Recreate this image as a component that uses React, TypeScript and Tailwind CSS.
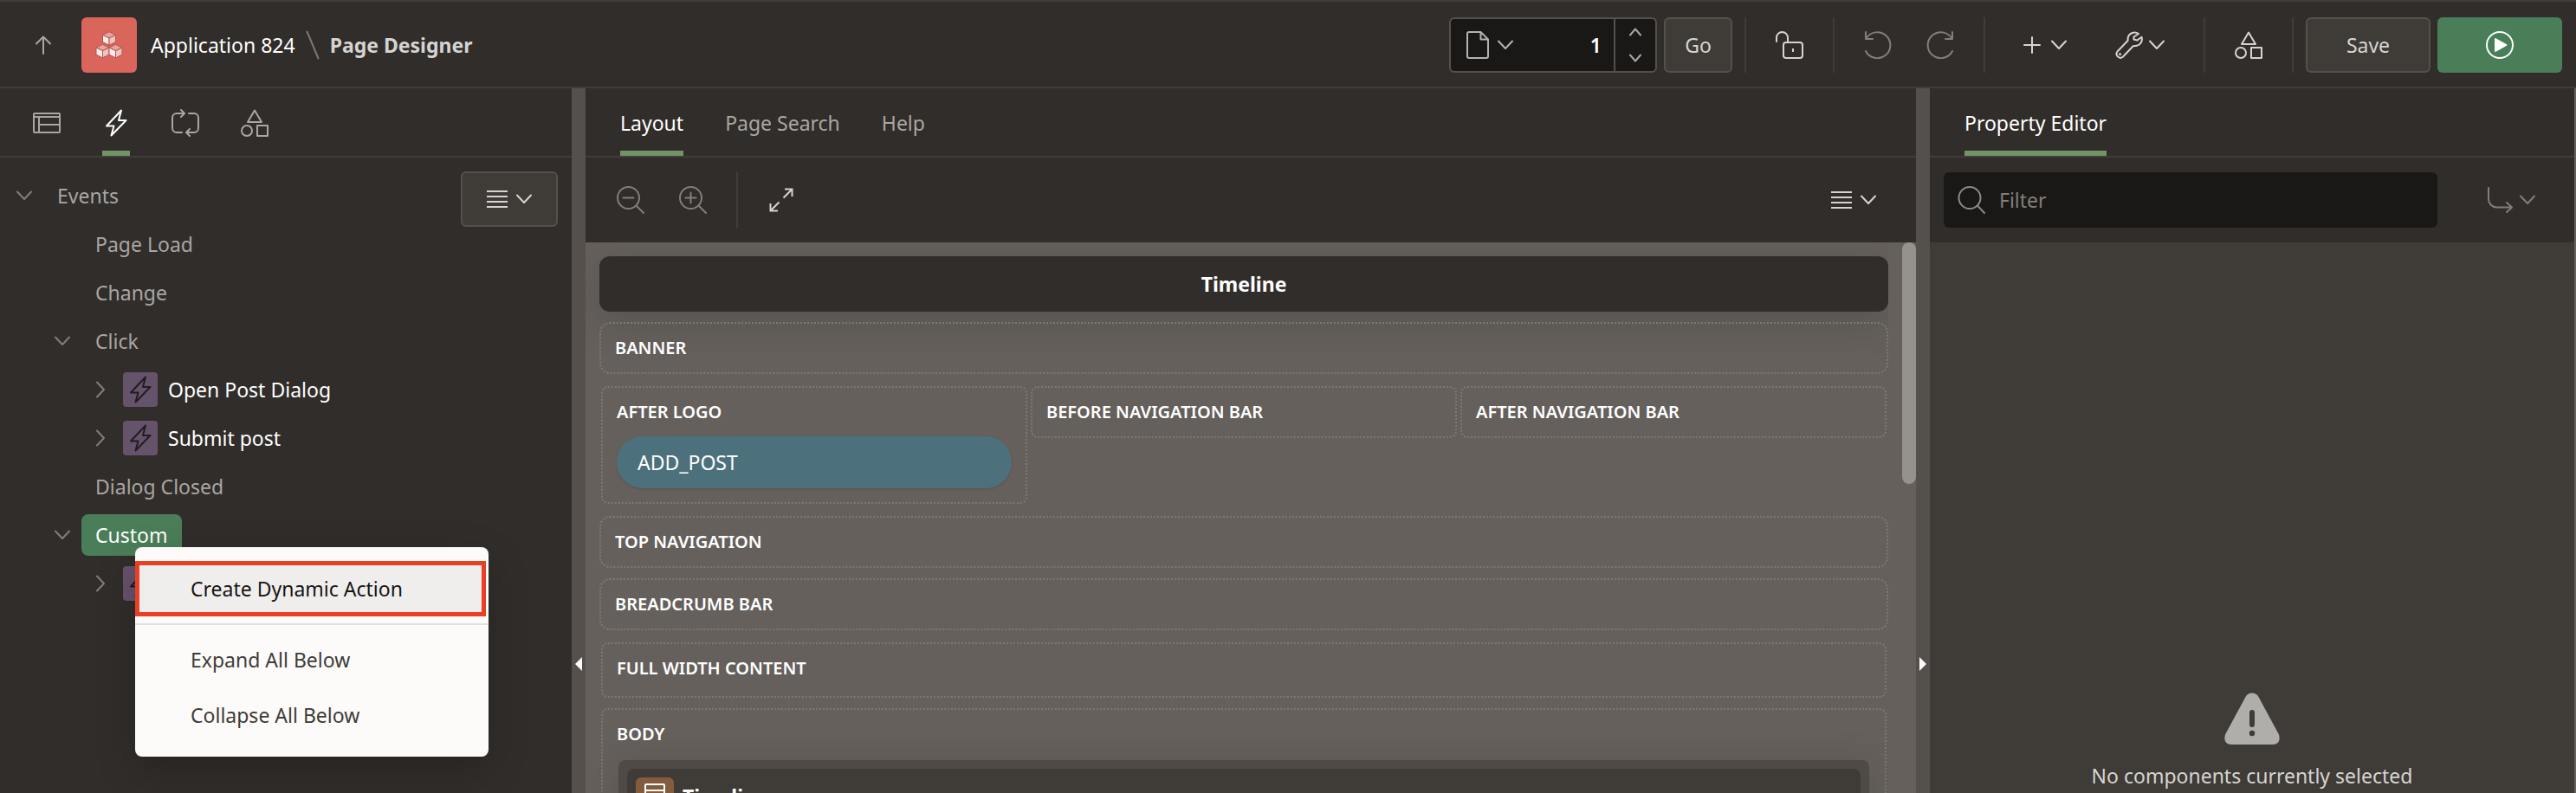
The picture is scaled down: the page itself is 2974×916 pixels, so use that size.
import React from "react";

type IconProps = { className?: string };

function Svg({
  w = 32,
  h = 32,
  className = "",
  children,
}: {
  w?: number;
  h?: number;
  className?: string;
  children: React.ReactNode;
}) {
  return (
    <svg
      width={w}
      height={h}
      viewBox={`0 0 ${w} ${h}`}
      fill="none"
      stroke="currentColor"
      strokeWidth={2}
      strokeLinecap="round"
      strokeLinejoin="round"
      aria-hidden="true"
      className={`shrink-0 ${className}`}
    >
      {children}
    </svg>
  );
}

const ChevronDown = ({ className }: IconProps) => (
  <Svg w={18} h={12} className={className}>
    <path d="M1 1.5 9 10 17 1.5" />
  </Svg>
);
const ChevronRight = ({ className }: IconProps) => (
  <Svg w={12} h={20} className={className}>
    <path d="M2 1.5 10 10 2 18.5" />
  </Svg>
);
const ListIcon = () => (
  <Svg w={24} h={22}>
    <path strokeLinecap="butt" d="M0 2h24M0 8h24M0 14h24M0 20h24" />
  </Svg>
);
const Bolt = ({ className }: IconProps) => (
  <Svg className={className}>
    <path d="M22 1.5 5 19.5h8.5L10.5 30.5 27.5 13H19Z" />
  </Svg>
);
const Shapes = () => (
  <Svg>
    <path d="M16 1.5 8 15h16Z" />
    <circle cx="7" cy="25" r="6" />
    <rect x="19" y="19" width="12" height="12" />
  </Svg>
);
const PageTree = () => (
  <Svg>
    <rect x="1" y="5" width="30" height="22" rx="1" />
    <path d="M1 9h30M7 9v18M7 18h24" />
  </Svg>
);
const Processing = () => (
  <Svg>
    <path d="M12 27H6a5 5 0 0 1-5-5V10a5 5 0 0 1 5-5h9M11 1l4 4-4 4M20 5h6a5 5 0 0 1 5 5v12a5 5 0 0 1-5 5h-9M21 23l-4 4 4 4" />
  </Svg>
);
const Undo = ({ className }: IconProps) => (
  <Svg className={className}>
    <path d="M2 1v8h8M2.5 8.5A15 15 0 1 1 2 23" />
  </Svg>
);

function Logo() {
  const cube = (x: number, y: number) => (
    <g key={`${x}-${y}`} transform={`translate(${x} ${y})`} stroke="#b8534b" strokeWidth="1" strokeLinejoin="round">
      <path d="M0 0 7.5 3.7 0 7.4-7.5 3.7Z" fill="#e8a59f" />
      <path d="M-7.5 3.7 0 7.4v8.1l-7.5-3.7Z" fill="#f8efee" />
      <path d="M7.5 3.7 0 7.4v8.1l7.5-3.7Z" fill="#efc3bf" />
    </g>
  );
  return (
    <svg width="64" height="64" viewBox="0 0 64 64" className="shrink-0 rounded-md bg-[#d9655b]" aria-hidden="true">
      {cube(32, 16.7)}
      {cube(24.5, 31.3)}
      {cube(39.5, 31.3)}
    </svg>
  );
}

const Divider = () => <span className="h-16 w-0.5 shrink-0 bg-[#403c38]" />;

function Header() {
  return (
    <header className="flex h-[102px] shrink-0 items-center border-y-2 border-[#403c38] pt-0.5 pr-4">
      <a href="#up" aria-label="Up" className="ml-10 text-[#a9a6a3]">
        <Svg w={20} h={22}>
          <path d="M10 21V1.5M2 9.5l8-8 8 8" />
        </Svg>
      </a>
      <a href="#app" className="ml-[34px] flex items-center gap-4 text-white">
        <Logo />
        Application 824
      </a>
      <Svg w={16} h={34} className="ml-3 text-[#7c7873]">
        <path d="M1.5 1.5 14.5 32.5" />
      </Svg>
      <h1 className="ml-3 font-bold text-[#d6d4d2]">Page Designer</h1>

      <div className="ml-auto flex items-center">
        <div className="flex h-16 w-60 rounded-md border-2 border-[#55504b] bg-[#1a1816]">
          <button aria-label="Page finder" className="flex items-center gap-2.5 pl-[18px] text-[#b5b2af]">
            <Svg w={26} h={32}>
              <path d="M16.5 1H3a2 2 0 0 0-2 2v26a2 2 0 0 0 2 2h20a2 2 0 0 0 2-2V9.5ZM16.5 1v8.5H25" />
            </Svg>
            <ChevronDown />
          </button>
          <input
            aria-label="Page number"
            defaultValue="1"
            className="w-0 min-w-0 grow bg-transparent pr-3.5 text-right font-semibold text-white outline-none"
          />
          <div className="flex w-12 flex-col items-center justify-center gap-5 border-l-2 border-[#55504b] text-[#a9a6a3]">
            <button aria-label="Next page">
              <Svg w={14} h={10}>
                <path d="M1 8.5 7 1.5 13 8.5" />
              </Svg>
            </button>
            <button aria-label="Previous page">
              <Svg w={14} h={10}>
                <path d="M1 1.5 7 8.5 13 1.5" />
              </Svg>
            </button>
          </div>
        </div>
        <button className="ml-2 mr-3.5 h-16 w-[79px] rounded-md border-2 border-[#55504b] bg-[#3f3b36] text-[#d6d4d2]">Go</button>
        <Divider />
        <button aria-label="Unlock page" className="flex w-[100px] justify-center text-[#d6d4d2]">
          <Svg>
            <path d="M1 12V7.5a6.5 6.5 0 0 1 13 0V13" />
            <rect x="9" y="13" width="22" height="18" rx="3" />
            <path strokeLinecap="butt" d="M20 20v4" />
          </Svg>
        </button>
        <Divider />
        <div className="flex w-[172px] justify-center gap-10 text-[#827e7a]">
          <button aria-label="Undo">
            <Undo />
          </button>
          <button aria-label="Redo">
            <Undo className="-scale-x-100" />
          </button>
        </div>
        <Divider />
        <div className="flex w-[252px] items-center pl-11 text-[#d6d4d2]">
          <button aria-label="Create" className="flex items-center gap-3">
            <Svg w={20} h={20}>
              <path d="M10 1v18M1 10h18" />
            </Svg>
            <ChevronDown />
          </button>
          <button aria-label="Utilities" className="ml-14 flex items-center gap-[7px]">
            <Svg>
              <path d="M27 3C22.5 0 16.5 2 15 6.5c-.5 1.5-.3 3-.5 4.500L2.500 23.5a4.500 4.500 0 0 0 6.300 6.300L20.500 17.500c1-.6 2.500-.2 4.500-.8 4.500-1.200 7-5.500 5.500-10L25.500 10.500 21.500 9.500 21.500 6.500Z" />
              <circle cx="5.5" cy="26.5" r=".6" />
            </Svg>
            <ChevronDown />
          </button>
        </div>
        <Divider />
        <button aria-label="Shared components" className="flex w-[100px] justify-center text-[#d6d4d2]">
          <Shapes />
        </button>
        <Divider />
        <button className="ml-3.5 h-16 w-36 rounded-md border-2 border-[#55504b] bg-[#3f3b36] text-[#d6d4d2]">Save</button>
        <button aria-label="Run page" className="ml-2 flex h-16 w-36 items-center justify-center rounded-md bg-[#4a7e58] text-white">
          <Svg>
            <circle cx="16" cy="16" r="15" />
            <path d="M11 9v14l12.5-7Z" fill="currentColor" />
          </Svg>
        </button>
      </div>
    </header>
  );
}

const tabBar = "flex h-20 shrink-0 border-b-2 border-[#403c38]";
const tabOn = "border-b-[6px] border-[#729467] pt-2 text-white";
const tabOff = "pt-0.5 text-[#a9a6a3]";

function TreeRow({
  level,
  open,
  leaf,
  icon,
  label,
  selected,
}: {
  level: 0 | 1 | 2;
  open?: boolean;
  leaf?: boolean;
  icon?: boolean;
  label: string;
  selected?: boolean;
}) {
  const indent = ["pl-[18px]", "pl-[62px]", "pl-[106px]"][level];
  return (
    <li className={`flex h-14 items-center ${indent}`}>
      <span className="flex w-5 shrink-0 justify-center text-[#827e7a]">
        {!leaf && (open ? <ChevronDown /> : <ChevronRight />)}
      </span>
      {icon && (
        <span className="ml-4 flex size-10 shrink-0 items-center justify-center rounded-sm bg-[#65536c] text-[#211d20]">
          <Bolt />
        </span>
      )}
      <span
        className={
          selected
            ? "ml-3 flex h-12 items-center rounded-lg bg-[#4a7e58] px-4 text-white"
            : icon
              ? "ml-3 text-white"
              : "ml-7 text-[#a9a6a3]"
        }
      >
        {label}
      </span>
    </li>
  );
}

function ContextMenu() {
  return (
    <div className="absolute left-[156px] top-[530px] w-[408px] rounded-lg bg-[#fcfbfa] py-4 text-[#403c38] shadow-[0_16px_48px_rgba(0,0,0,0.2)]">
      <button className="flex h-16 w-[405px] items-center border-[5px] border-[#e93f24] bg-[#f0eeed] pl-[59px] text-[#161513]">
        Create Dynamic Action
      </button>
      <hr className="my-2 border-t-2 border-[#e3e1df]" />
      <button className="flex h-16 w-full items-center pl-16">Expand All Below</button>
      <button className="flex h-16 w-full items-center pl-16">Collapse All Below</button>
    </div>
  );
}

function EventsPanel() {
  return (
    <aside className="relative w-[660px] shrink-0">
      <nav className={`${tabBar} gap-12 pl-[38px]`}>
        <button aria-label="Rendering" className={tabOff}>
          <PageTree />
        </button>
        <button aria-label="Dynamic actions" className={tabOn}>
          <Bolt />
        </button>
        <button aria-label="Processing" className={tabOff}>
          <Processing />
        </button>
        <button aria-label="Page shared components" className={tabOff}>
          <Shapes />
        </button>
      </nav>
      <div className="flex items-start justify-between pr-4">
        <ul className="pt-4">
          <TreeRow level={0} open label="Events" />
          <TreeRow level={1} leaf label="Page Load" />
          <TreeRow level={1} leaf label="Change" />
          <TreeRow level={1} open label="Click" />
          <TreeRow level={2} icon label="Open Post Dialog" />
          <TreeRow level={2} icon label="Submit post" />
          <TreeRow level={1} leaf label="Dialog Closed" />
          <TreeRow level={1} open selected label="Custom" />
          <TreeRow level={2} icon label="" />
        </ul>
        <button
          aria-label="Tree options"
          className="mt-4 flex h-16 w-28 items-center justify-center gap-2.5 rounded-md border-2 border-[#55504b] bg-[#3f3b36] text-[#d6d4d2]"
        >
          <ListIcon />
          <ChevronDown />
        </button>
      </div>
      <ContextMenu />
    </aside>
  );
}

function Splitter({ side }: { side: "left" | "right" }) {
  return (
    <div className="flex w-4 shrink-0 flex-col items-center bg-[#55504b] pt-[657px]">
      <svg width="8" height="16" viewBox="0 0 8 16" fill="#fcfbfa" aria-hidden="true">
        <path d={side === "left" ? "M8 0v16L0 8Z" : "M0 0v16l8-8Z"} />
      </svg>
    </div>
  );
}

function Region({
  title,
  rounded = "rounded-lg",
  children,
  className = "",
}: {
  title: string;
  rounded?: string;
  children?: React.ReactNode;
  className?: string;
}) {
  return (
    <section className={`border-2 border-dotted border-[#7d7873] px-4 ${rounded} ${className}`}>
      <h3 className="text-xl leading-[56px] font-semibold text-white uppercase">{title}</h3>
      {children}
    </section>
  );
}

function LayoutPanel() {
  return (
    <main className="flex min-w-0 grow flex-col">
      <nav className={`${tabBar} gap-12 pl-10`}>
        <button className={tabOn}>Layout</button>
        <button className={tabOff}>Page Search</button>
        <button className={tabOff}>Help</button>
      </nav>
      <div className="flex h-[98px] shrink-0 items-center pr-[46px] pl-9">
        <button aria-label="Zoom out" className="text-[#827e7a]">
          <Svg>
            <circle cx="13.5" cy="13.5" r="12.5" />
            <path d="M22.5 22.5 31 31M7.5 13.5h12" />
          </Svg>
        </button>
        <button aria-label="Zoom in" className="ml-10 text-[#827e7a]">
          <Svg>
            <circle cx="13.5" cy="13.5" r="12.5" />
            <path d="M22.5 22.5 31 31M7.5 13.5h12M13.5 7.5v12" />
          </Svg>
        </button>
        <span className="ml-[34px] h-16 w-0.5 bg-[#403c38]" />
        <button aria-label="Expand" className="ml-9 text-[#d6d4d2]">
          <Svg w={28} h={30}>
            <path
              strokeLinecap="butt"
              strokeLinejoin="miter"
              d="M16.5 12.5 26 3M18 2.5h8.5V11M11.5 17.5 2 27M1.5 19v8.5H10"
            />
          </Svg>
        </button>
        <button aria-label="Layout options" className="ml-auto flex items-center gap-2.5 text-[#d6d4d2]">
          <ListIcon />
          <ChevronDown />
        </button>
      </div>
      <div className="flex min-h-0 grow bg-[#65605c]">
        <div className="flex h-full grow flex-col gap-3 overflow-hidden pt-4 pl-4">
          <h2 className="h-16 shrink-0 rounded-xl bg-[#312d2a] text-center leading-[64px] font-bold text-white shadow-[0_12px_48px_rgba(0,0,0,0.14)]">
            Timeline
          </h2>
          <Region title="Banner" rounded="rounded-xl" />
          <div className="grid grid-cols-3 items-start gap-1 p-0.5">
            <Region title="After Logo" className="pb-4">
              <div className="rounded-full bg-[#4d717c] px-6 leading-[60px] text-white shadow-sm">ADD_POST</div>
            </Region>
            <Region title="Before Navigation Bar" />
            <Region title="After Navigation Bar" />
          </div>
          <Region title="Top Navigation" rounded="rounded-xl" />
          <Region title="Breadcrumb Bar" rounded="rounded-xl" />
          <div className="flex flex-col gap-3 p-0.5">
            <Region title="Full Width Content" className="pb-1" />
            <Region title="Body">
              <div className="mx-0.5 mt-0.5 rounded-lg bg-[#4f4a46] p-2.5 shadow-[0_8px_48px_rgba(0,0,0,0.14)]">
                <div className="flex h-64 items-start gap-2.5 rounded-lg bg-[#3f3b36] p-2.5">
                  <span className="flex size-11 items-center justify-center rounded-md bg-[#835c3e] text-white">
                    <Svg w={24} h={32}>
                      <rect x="1" y="2" width="22" height="28" rx="1" />
                      <path d="M1 9h22M1 17h22M1 24h22" />
                    </Svg>
                  </span>
                  <h4 className="leading-[44px] font-bold text-white">Timeline</h4>
                </div>
              </div>
            </Region>
          </div>
        </div>
        <div className="w-8 shrink-0 pl-4">
          <div className="h-[279px] rounded-full bg-[#95918c]" />
        </div>
      </div>
    </main>
  );
}

function PropertyEditor() {
  return (
    <aside className="flex w-[746px] shrink-0 flex-col border-r-2 border-[#65605c]">
      <nav className={`${tabBar} pl-10`}>
        <button className={tabOn}>Property Editor</button>
      </nav>
      <div className="flex h-[98px] shrink-0 items-center pr-[45px] pl-4">
        <label className="flex h-16 w-[570px] items-center gap-4 rounded-md bg-[#1a1816] px-4 text-[#8d8986]">
          <Svg>
            <circle cx="14" cy="13.5" r="12.5" />
            <path d="M23 22.5 31 31" />
          </Svg>
          <input
            aria-label="Filter"
            placeholder="Filter"
            className="w-0 grow bg-transparent text-white outline-none placeholder:text-[#827e7a]"
          />
        </label>
        <button aria-label="Go to group" className="ml-auto flex items-center gap-2 text-[#827e7a]">
          <Svg w={30} h={30}>
            <path d="M2 1v13a9.5 9.5 0 0 0 9.5 9.500H28.500M23 18l6 5.500-6 5.500" />
          </Svg>
          <ChevronDown />
        </button>
      </div>
      <div className="flex grow flex-col items-center bg-[#3f3b36] pt-[520px] text-[#d6d4d2]">
        <svg width="64" height="60" viewBox="0 0 64 60" className="shrink-0" aria-hidden="true">
          <path d="M24.5 5a8.5 8.5 0 0 1 15 0L63 48.5Q66 60 55 60H9Q-2 60 1 48.5Z" fill="#b0aeab" />
          <path d="M32 23v14" stroke="#3f3b36" strokeWidth="6" strokeLinecap="round" />
          <circle cx="32" cy="47" r="3.2" fill="#3f3b36" />
        </svg>
        <p className="mt-5 leading-8">No components currently selected</p>
      </div>
    </aside>
  );
}

export default function App() {
  return (
    <div className="flex h-screen flex-col overflow-hidden bg-[#312d2a] font-['Noto_Sans',sans-serif] text-[23px]">
      <Header />
      <div className="flex min-h-0 grow">
        <EventsPanel />
        <Splitter side="left" />
        <LayoutPanel />
        <Splitter side="right" />
        <PropertyEditor />
      </div>
    </div>
  );
}
